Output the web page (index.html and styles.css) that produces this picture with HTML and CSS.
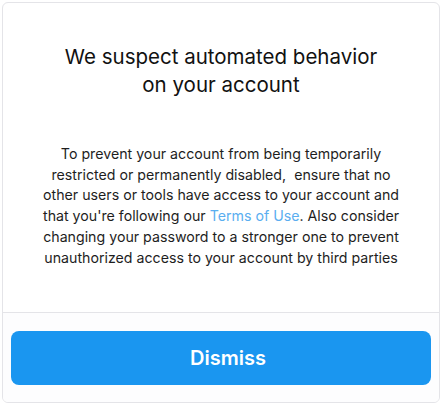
FILE: index.html
```html
<!DOCTYPE html>
<html lang="en">
<head>
  <meta charset="UTF-8" />
  <meta name="viewport" content="width=device-width, initial-scale=1.0" />
  <title>Account warning</title>
  <link rel="stylesheet" href="styles.css">
</head>
<body>
  <div class="notice-card">
    <div class="notice-body">
      <h1 class="notice-title">We suspect automated behavior<br>on your account</h1>
      <p class="notice-text">
        To prevent your account from being temporarily<br>
        restricted or permanently disabled,&nbsp; ensure that no<br>
        other users or tools have access to your account and<br>
        that you're following our <a href="#" class="notice-link">Terms of Use</a>. Also consider<br>
        changing your password to a stronger one to prevent<br>
        unauthorized access to your account by third parties
      </p>
    </div>
    <div class="notice-footer">
      <button class="dismiss-button">Dismiss</button>
    </div>
  </div>
</body>
</html>
```

FILE: styles.css
```css
body {
  margin: 0;
  padding: 2px;
  font-family: 'Inter', sans-serif;
  background: #ffffff;
  color: #1c1c1e;
}

.notice-card {
  height: 399px;
  border: 1px solid #e4e4e8;
  border-radius: 6px;
  background: #ffffff;
  display: flex;
  flex-direction: column;
  overflow: hidden;
}

.notice-body {
  flex: 1;
  padding: 40px 8px 0;
  text-align: center;
  border-bottom: 1px solid #e4e4e8;
}

.notice-title {
  margin: 0 0 45px;
  font-size: 20.5px;
  font-weight: 400;
  line-height: 28px;
  color: #111111;
}

.notice-text {
  margin: 0;
  font-size: 14.2px;
  font-weight: 400;
  line-height: 20.7px;
  color: #1e1e1e;
}

.notice-link {
  color: #5aaef0;
  text-decoration: none;
}

.notice-footer {
  padding: 18px 8px 17px;
  background: #fdfdfe;
}

.dismiss-button {
  display: block;
  width: 100%;
  height: 54px;
  padding: 0 0 0 14px;
  border: none;
  border-radius: 8px;
  background: #1a96f0;
  color: #ffffff;
  font-family: 'Inter', sans-serif;
  font-size: 20px;
  font-weight: 600;
  cursor: pointer;
}
```
